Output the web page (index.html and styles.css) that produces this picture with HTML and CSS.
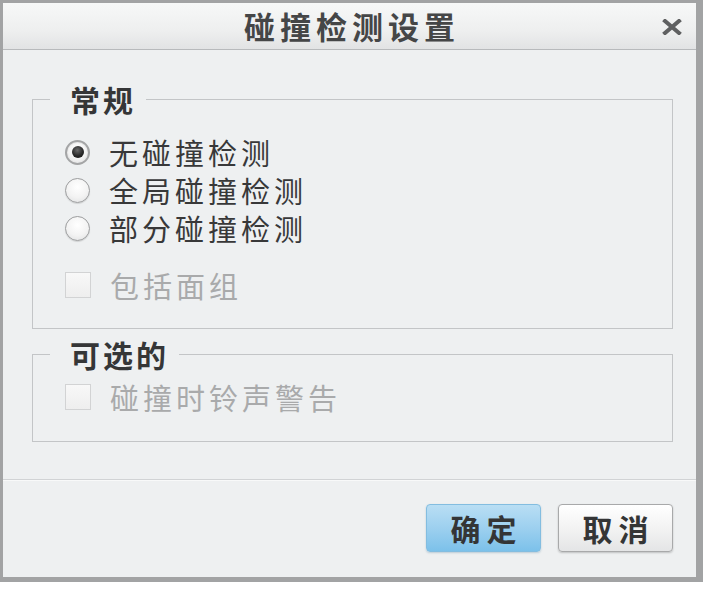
FILE: index.html
```html
<!DOCTYPE html>
<html>
  <head>
    <meta charset="UTF-8">
    <link rel="stylesheet" href="styles.css">
  </head>
  <body>
    <div class="dialog">
      <div class="titlebar">
        <span></span>
        <span class="title">碰撞检测设置</span>
        <span class="close">
          <svg width="20" height="16" viewBox="0 0 20 16"><path d="M3 2 L17 14 M17 2 L3 14" stroke="#5f6061" stroke-width="4" stroke-linecap="square"/></svg>
        </span>
      </div>

      <div class="main">
        <fieldset class="group group-first">
          <legend>常规</legend>
          <div class="options">
            <label class="row"><span class="radio radio-on"></span><span>无碰撞检测</span></label>
            <label class="row"><span class="radio"></span><span>全局碰撞检测</span></label>
            <label class="row"><span class="radio"></span><span>部分碰撞检测</span></label>
            <label class="row row-check disabled"><span class="check"></span><span>包括面组</span></label>
          </div>
        </fieldset>
        <fieldset class="group group-second">
          <legend>可选的</legend>
          <div class="options options-tight">
            <label class="row disabled"><span class="check"></span><span>碰撞时铃声警告</span></label>
          </div>
        </fieldset>
      </div>

      <div class="footer">
        <button class="btn btn-primary">确定</button>
        <button class="btn">取消</button>
      </div>
    </div>
  </body>
</html>
```

FILE: styles.css
```css
:root {
  --text-color: #383839;
  --disabled-color: #a9aaab;
  --frame-color: #c3c5c7;
}
body {
  margin: 0;
  background: white;
  font-family: "Noto Sans CJK SC", "Noto Sans", sans-serif;
  color: var(--text-color);
}
.dialog {
  width: 703px;
  height: 582px;
  box-sizing: border-box;
  border-style: solid;
  border-color: #a2a3a4;
  border-width: 3px 7px 5px 3px;
  background: #eef0f1;
  display: flex;
  flex-direction: column;
}
.titlebar {
  height: 46px;
  flex: none;
  border-bottom: 1px solid #b8babc;
  background: linear-gradient(to bottom, #f7f8f8 0%, #eeefef 60%, #e2e3e4 100%);
  display: grid;
  grid-template-columns: 1fr auto 1fr;
  align-items: center;
}
.title {
  font-size: 31px;
  font-weight: 700;
  letter-spacing: 5px;
  padding-left: 5px;
  color: #454647;
  line-height: 46px;
}
.close {
  justify-self: end;
  padding-right: 14px;
  display: flex;
  padding-top: 2px;
}
.main {
  flex: 1;
  padding: 0 23px 0 29px;
}
.group {
  margin: 0;
  padding: 0;
  border: 1px solid var(--frame-color);
  min-width: 0;
}
.group-first {
  margin-top: 31px;
}
.group-second {
  margin-top: 7px;
}
.group legend {
  margin-left: 17px;
  padding: 0 10px 0 20px;
  font-size: 30px;
  font-weight: 700;
  letter-spacing: 3px;
  line-height: 36px;
  color: #353637;
}
.options {
  padding: 16px 0 24px 32px;
  display: flex;
  flex-direction: column;
}
.options-tight {
  padding: 6px 0 25px 32px;
}
.row {
  height: 38px;
  display: flex;
  align-items: center;
  gap: 19px;
  font-size: 29px;
  letter-spacing: 4px;
  line-height: 38px;
}
.row-check {
  margin-top: 19px;
}
.disabled {
  color: var(--disabled-color);
}
.radio {
  width: 25px;
  height: 25px;
  box-sizing: border-box;
  border-radius: 50%;
  border: 1px solid #9c9d9e;
  background: radial-gradient(circle at 50% 35%, #ffffff 0%, #f3f3f3 55%, #dedfe0 100%);
  box-shadow: 0 1px 1px rgba(0, 0, 0, 0.12);
  display: flex;
  align-items: center;
  justify-content: center;
  flex: none;
}
.radio-on {
  border: 2px solid #a4a5a6;
  box-shadow: inset 0 0 0 1px #e8e8e8;
}
.radio-on::after {
  content: "";
  width: 12px;
  height: 12px;
  border-radius: 50%;
  background: radial-gradient(circle at 45% 35%, #6a6a6a 0%, #2a2a2a 55%, #101010 100%);
}
.check {
  width: 26px;
  height: 26px;
  box-sizing: border-box;
  border: 1px solid #d2d3d4;
  background: linear-gradient(to bottom, #f8f8f8, #eeeeee);
  flex: none;
}
.footer {
  height: 98px;
  flex: none;
  border-top: 1px solid #d1d3d5;
  box-shadow: inset 0 1px 0 #f8f9f9;
  display: flex;
  justify-content: flex-end;
  align-items: flex-start;
  gap: 17px;
  padding: 24px 23px 0 0;
  box-sizing: border-box;
}
.btn {
  width: 115px;
  height: 48px;
  border: 1px solid #a8a9aa;
  border-radius: 4px;
  background: linear-gradient(to bottom, #ffffff 0%, #f3f3f3 50%, #e4e5e6 100%);
  box-shadow: 0 1px 2px rgba(0, 0, 0, 0.2);
  font-family: inherit;
  font-size: 30px;
  font-weight: 700;
  letter-spacing: 6px;
  padding: 0 0 0 6px;
  color: #343536;
}
.btn-primary {
  border-color: #83bde0;
  background: linear-gradient(to bottom, #b9def4 0%, #9dd0ef 50%, #7cc1ea 100%);
  box-shadow: 0 1px 2px rgba(40, 100, 140, 0.25);
}
```
